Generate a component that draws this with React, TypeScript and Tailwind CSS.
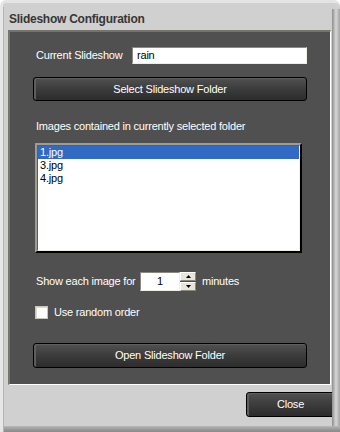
import React from "react";

const font = { fontFamily: '"Liberation Sans", Arial, sans-serif' };

function DarkButton({ label, className = "" }: { label: string; className?: string }) {
  return (
    <div
      className={
        "flex items-center justify-center rounded-[3px] border border-black bg-gradient-to-b from-[#515151] via-[#3c3c3c] to-[#2c2c2c] text-[11px] leading-[13px] tracking-[-0.2px] text-white shadow-[inset_2px_1px_0_#5e5e5e] " +
        className
      }
    >
      {label}
    </div>
  );
}

export default function App() {
  return (
    <div style={font} className="w-[340px] h-[432px] bg-white">
      <div className="relative h-[432px] w-[340px] rounded-t-[6px] border-l-[3px] border-t-[3px] border-l-[#e6e6e6] border-t-[#e4e4e4] bg-[#d0d0d0]">
        {/* right frame */}
        <div className="absolute right-0 top-[6px] bottom-0 w-[8px] bg-gradient-to-r from-[#8e8e8e] via-[#d8d8d8] to-[#a2a2a2]" />
        {/* bottom frame */}
        <div className="absolute bottom-0 left-0 right-0 h-[6px] bg-gradient-to-b from-[#b8b8b8] via-[#9c9c9c] to-[#8a8a8a]" />
        <div className="absolute left-0 top-[4px] bottom-0 w-[1px] bg-[#b4b4b4]" />

        <div className="h-[24px] pl-[6px] pt-[9px] text-[12px] font-bold leading-[15px] tracking-[-0.25px] text-[#363636]">
          Slideshow Configuration
        </div>

        {/* dark panel */}
        <div className="ml-[5px] mt-[3px] h-[355px] w-[323px] overflow-hidden border-l-2 border-t-2 border-b border-r border-l-[#77746a] border-t-[#77746a] border-b-white border-r-white bg-[#505050]">
          <div className="flex flex-col px-[23px] pt-[15px] text-[11px] leading-[13px] tracking-[-0.2px] text-white">
            <div className="flex h-[17px] items-center">
              <span className="ml-[3px] w-[96px]">Current Slideshow</span>
              <div className="flex h-[17px] w-[175px] items-center border border-t-[#8a8a80] border-l-[#8a8a80] border-b-[#efeee4] border-r-[#efeee4] bg-white pl-[4px] text-black">
                rain
              </div>
            </div>
            <DarkButton label="Select Slideshow Folder" className="mt-[13px] h-[24px] w-[274px]" />
            <div className="ml-[3px] mt-[19px] h-[13px]">Images contained in currently selected folder</div>
            <div className="ml-[2px] mt-[10px] h-[110px] w-[267px] border-2 border-t-[#9e9b8f] border-l-[#9e9b8f] border-b-black border-r-black bg-white">
              <div className="h-full border border-t-[#5f5d55] border-l-[#5f5d55] border-b-[#f0efe6] border-r-[#f0efe6] text-black">
                <div className="h-[13px] bg-[#316ac5] pl-[2px] text-white">1.jpg</div>
                <div className="h-[13px] pl-[2px]">3.jpg</div>
                <div className="h-[13px] pl-[2px]">4.jpg</div>
              </div>
            </div>
            <div className="mt-[19px] flex h-[19px] items-center">
              <span className="ml-[3px] w-[104px]">Show each image for</span>
              <div className="flex h-[19px] w-[40px] items-center justify-center border border-t-[#8a8a80] border-l-[#8a8a80] border-b-[#efeee4] border-r-[#efeee4] bg-white text-black">
                1
              </div>
              <div className="flex h-[19px] w-[16px] flex-col">
                <div className="flex h-[9px] items-center justify-center border border-t-white border-l-white border-b-[#8a877b] border-r-[#8a877b] bg-[#e8e6da]">
                  <svg width="5" height="3" viewBox="0 0 5 3"><path d="M2.5 0L5 3H0z" fill="#000" /></svg>
                </div>
                <div className="mt-[1px] flex h-[9px] items-center justify-center border border-t-white border-l-white border-b-[#8a877b] border-r-[#8a877b] bg-[#e8e6da]">
                  <svg width="5" height="3" viewBox="0 0 5 3"><path d="M0 0H5L2.5 3z" fill="#000" /></svg>
                </div>
              </div>
              <span className="ml-[6px]">minutes</span>
            </div>
            <div className="mt-[15px] flex h-[13px] items-center">
              <div className="ml-[2px] h-[13px] w-[13px] border border-[#c9c6b6] bg-white shadow-[inset_1px_1px_0_#dedcd0]" />
              <span className="ml-[6px]">Use random order</span>
            </div>
            <DarkButton label="Open Slideshow Folder" className="mt-[24px] h-[25px] w-[274px]" />
          </div>
        </div>

        <div className="flex justify-end pr-[5px] pt-[7px]">
          <DarkButton label="Close" className="h-[25px] w-[89px]" />
        </div>
      </div>
    </div>
  );
}
